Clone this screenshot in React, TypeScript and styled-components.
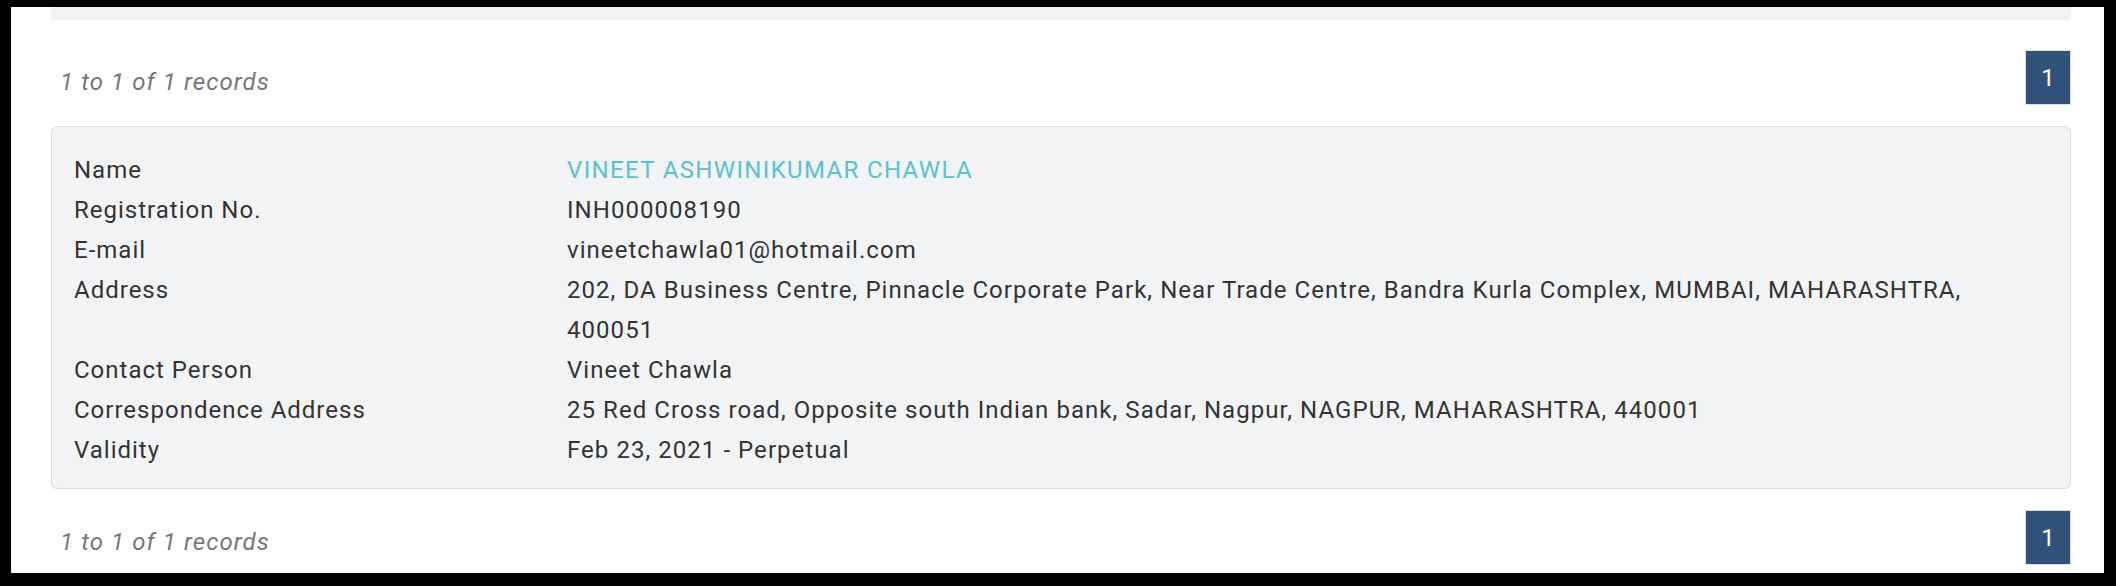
import React from 'react';
import styled, { createGlobalStyle } from 'styled-components';

const GlobalStyle = createGlobalStyle`
  html, body {
    margin: 0;
    padding: 0;
    background: #000000;
  }
  body {
    font-family: Roboto, "Liberation Sans", Arial, sans-serif;
    letter-spacing: 1px;
  }
`;

export const Frame = styled.div`
  background: #ffffff;
  box-sizing: border-box;
  height: 566px;
  margin: 7px 12px 13px 11px;
  padding: 0 33px 0 40px;
`;

export const TopStrip = styled.div`
  background: #f4f3f3;
  height: 13px;
`;

export const PagerRow = styled.div<{ $gap: number }>`
  align-items: center;
  display: flex;
  justify-content: space-between;
  margin-top: ${(p) => p.$gap}px;
`;

export const RecordsText = styled.span`
  color: #777777;
  font-size: 24px;
  font-style: italic;
  letter-spacing: 1.1px;
  line-height: 40px;
  padding-top: 8px;
  padding-left: 9px;
`;

export const PageButton = styled.span`
  align-items: center;
  background: #31527a;
  border: 1px solid #dddddd;
  box-sizing: border-box;
  color: #ffffff;
  display: flex;
  font-size: 24px;
  height: 55px;
  justify-content: center;
  letter-spacing: 0;
  width: 46px;
`;

export const DetailCard = styled.div`
  background: #f2f3f5;
  border: 1px solid #dcdcdc;
  border-radius: 6px;
  margin-top: 21px;
  padding: 23px 40px 18px 22px;
`;

export const DetailRow = styled.div`
  color: #333333;
  display: grid;
  font-size: 24px;
  grid-template-columns: 493px 1fr;
  line-height: 40px;
`;

export const Value = styled.span<{ $accent?: boolean }>`
  color: ${(p) => (p.$accent ? '#5bc1d2' : '#333333')};
  letter-spacing: ${(p) => (p.$accent ? '1.35px' : '1.05px')};
`;

const rows: { label: string; value: string; accent?: boolean }[] = [
  { label: 'Name', value: 'VINEET ASHWINIKUMAR CHAWLA', accent: true },
  { label: 'Registration No.', value: 'INH000008190' },
  { label: 'E-mail', value: 'vineetchawla01@hotmail.com' },
  {
    label: 'Address',
    value:
      '202, DA Business Centre, Pinnacle Corporate Park, Near Trade Centre, Bandra Kurla Complex, MUMBAI, MAHARASHTRA, 400051',
  },
  { label: 'Contact Person', value: 'Vineet Chawla' },
  {
    label: 'Correspondence Address',
    value: '25 Red Cross road, Opposite south Indian bank, Sadar, Nagpur, NAGPUR, MAHARASHTRA, 440001',
  },
  { label: 'Validity', value: 'Feb 23, 2021 - Perpetual' },
];

function Pager({ gap }: { gap: number }) {
  return (
    <PagerRow $gap={gap}>
      <RecordsText>1 to 1 of 1 records</RecordsText>
      <PageButton>1</PageButton>
    </PagerRow>
  );
}

export default function App() {
  return (
    <>
      <GlobalStyle />
      <Frame>
        <TopStrip />
        <Pager gap={30} />
        <DetailCard>
          {rows.map((r) => (
            <DetailRow key={r.label}>
              <span>{r.label}</span>
              <Value $accent={r.accent}>{r.value}</Value>
            </DetailRow>
          ))}
        </DetailCard>
        <Pager gap={21} />
      </Frame>
    </>
  );
}
